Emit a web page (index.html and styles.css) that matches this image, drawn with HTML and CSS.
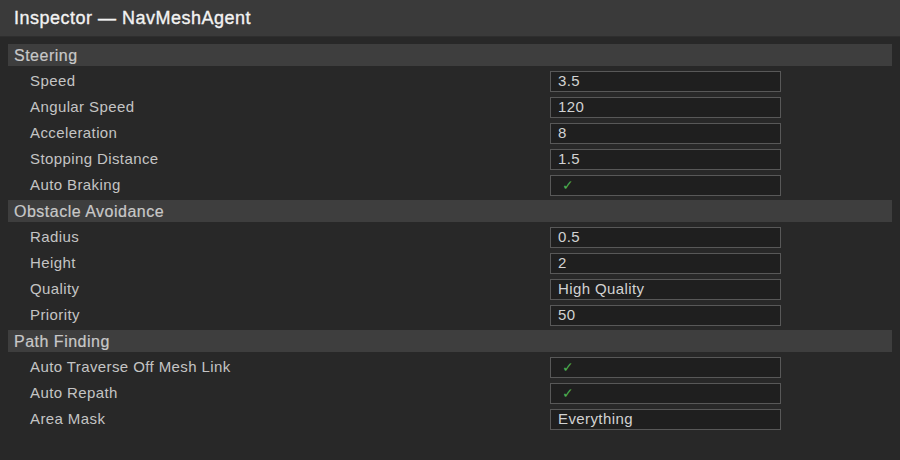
FILE: index.html
```html
<!DOCTYPE html>
<html>
<head>
<meta charset="utf-8">
<link rel="stylesheet" href="styles.css">
</head>
<body>
<div class="inspector">
  <div class="titlebar">Inspector — NavMeshAgent</div>
  <div class="panel">
    <section class="group">
      <div class="group-head">Steering</div>
      <div class="row"><span class="label">Speed</span><span class="field">3.5</span></div>
      <div class="row"><span class="label">Angular Speed</span><span class="field">120</span></div>
      <div class="row"><span class="label">Acceleration</span><span class="field">8</span></div>
      <div class="row"><span class="label">Stopping Distance</span><span class="field">1.5</span></div>
      <div class="row"><span class="label">Auto Braking</span><span class="field check">✓</span></div>
    </section>
    <section class="group">
      <div class="group-head">Obstacle Avoidance</div>
      <div class="row"><span class="label">Radius</span><span class="field">0.5</span></div>
      <div class="row"><span class="label">Height</span><span class="field">2</span></div>
      <div class="row"><span class="label">Quality</span><span class="field">High Quality</span></div>
      <div class="row"><span class="label">Priority</span><span class="field">50</span></div>
    </section>
    <section class="group">
      <div class="group-head">Path Finding</div>
      <div class="row"><span class="label">Auto Traverse Off Mesh Link</span><span class="field check">✓</span></div>
      <div class="row"><span class="label">Auto Repath</span><span class="field check">✓</span></div>
      <div class="row"><span class="label">Area Mask</span><span class="field">Everything</span></div>
    </section>
  </div>
</div>
</body>
</html>
```
FILE: styles.css
```css
* { box-sizing: border-box; }

html, body {
  margin: 0;
  padding: 0;
  background: #282828;
}

body {
  width: 900px;
  height: 460px;
  overflow: hidden;
  font-family: "Liberation Sans", Arial, sans-serif;
  color: #c4c4c4;
}

.titlebar {
  height: 37px;
  background: #3a3a3a;
  color: #f2f2f2;
  font-size: 18px;
  font-weight: 400;
  letter-spacing: 0.5px;
  -webkit-text-stroke: 0.35px #f2f2f2;
  padding-left: 14px;
  display: flex;
  align-items: center;
  border-bottom: 1px solid #2e2e2e;
}

.panel {
  padding: 7px 8px 8px;
  display: flex;
  flex-direction: column;
}

.group {
  display: flex;
  flex-direction: column;
  padding-bottom: 2px;
}

.group-head {
  height: 22px;
  background: #3e3e3e;
  color: #c8c8c8;
  font-size: 16px;
  font-weight: 400;
  letter-spacing: 0.5px;
  -webkit-text-stroke: 0.2px #c8c8c8;
  padding-left: 6px;
  padding-top: 1px;
  display: flex;
  align-items: center;
  margin-bottom: 2px;
}

.row {
  height: 26px;
  display: grid;
  grid-template-columns: 520px 231px;
  align-items: center;
  padding-left: 22px;
  font-size: 15px;
  letter-spacing: 0.4px;
}

.label {
  color: #c4c4c4;
  padding-bottom: 1px;
}

.field {
  height: 21px;
  background: #1f1f1f;
  border: 1px solid #585858;
  color: #d2d2d2;
  padding-left: 7px;
  padding-bottom: 1px;
  display: flex;
  align-items: center;
  font-size: 15px;
}

.field.check {
  color: #4caf50;
  font-size: 14px;
  padding-left: 11px;
}
```
